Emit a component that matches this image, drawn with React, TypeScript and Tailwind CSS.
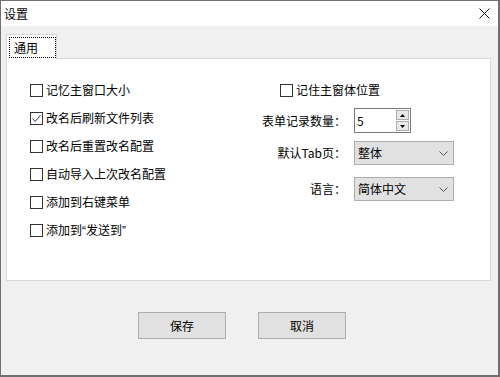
import React from "react";

function Box({ checked }: { checked?: boolean }) {
  return (
    <span className="w-[13px] h-[13px] border border-[#333333] bg-white flex items-center justify-center shrink-0">
      {checked && (
        <svg width="11" height="11" viewBox="0 0 11 11">
          <path d="M1.5 5.5 L4.2 8.4 L9.5 2.2" fill="none" stroke="#3a3a3a" strokeWidth="1" />
        </svg>
      )}
    </span>
  );
}

function CheckRow({ label, checked }: { label: React.ReactNode; checked?: boolean }) {
  return (
    <div className="h-[28px] flex items-center gap-[3px]">
      <Box checked={checked} />
      <span>{label}</span>
    </div>
  );
}

function Chevron() {
  return (
    <svg width="9" height="5" viewBox="0 0 9 5">
      <path d="M0.5 0.5 L4.5 4.5 L8.5 0.5" fill="none" stroke="#555555" strokeWidth="1" />
    </svg>
  );
}

function Combo({ value }: { value: string }) {
  return (
    <div className="w-[100px] h-[24px] border border-[#adadad] bg-[#e1e1e1] flex items-center justify-between pl-[3px] pr-[5px]">
      <span>{value}</span>
      <Chevron />
    </div>
  );
}

export default function App() {
  return (
    <div className="w-[500px] h-[377px] flex flex-col border-l border-t border-r-2 border-b-2 border-[#707070] text-[12px] text-black font-['Noto_Sans_CJK_SC','Microsoft_YaHei',sans-serif] leading-normal overflow-hidden">
      <div className="h-[25px] bg-white flex items-center justify-between pl-[3px] pr-[8px] shrink-0">
        <span className="text-[12px]">设置</span>
        <svg width="11" height="11" viewBox="0 0 11 11">
          <path d="M0.5 0.5 L10.5 10.5 M10.5 0.5 L0.5 10.5" stroke="#111111" strokeWidth="1" />
        </svg>
      </div>
      <div className="flex-1 bg-[#f0f0f0] pl-[5px] pt-[8px] flex flex-col">
        <div className="relative z-10 -mb-px w-[51px] h-[25px] bg-white border border-b-0 border-[#d9d9d9]">
          <div className="mt-[2px] ml-[2px] w-[47px] h-[21px] border border-dotted border-black flex items-center pl-[4px]">
            通用
          </div>
        </div>
        <div className="w-[485px] h-[223px] bg-white border border-[#d9d9d9] flex">
          <div className="w-[247px] pl-[23px] pt-[17px] flex flex-col">
            <CheckRow label="记忆主窗口大小" />
            <CheckRow label="改名后刷新文件列表" checked />
            <CheckRow label="改名后重置改名配置" />
            <CheckRow label="自动导入上次改名配置" />
            <CheckRow label="添加到右键菜单" />
            <CheckRow
              label={
                <>
                  添加到<span className="font-['Liberation_Sans',sans-serif]">“</span>发送到<span className="font-['Liberation_Sans',sans-serif]">”</span>
                </>
              }
            />
          </div>
          <div className="pt-[17px] flex flex-col">
            <div className="h-[28px] flex items-center gap-[3px] pl-[26px]">
              <Box />
              <span>记住主窗体位置</span>
            </div>
            <div className="mt-[4px] h-[25px] flex items-center gap-[8px]">
              <span className="w-[92px] text-right">表单记录数量：</span>
              <div className="w-[57px] h-[25px] border border-[#7a7a7a] bg-white flex">
                <span className="flex-1 flex items-center pl-[2px]">5</span>
                <div className="w-[15px] flex flex-col p-[1px] gap-[1px]">
                  <div className="flex-1 border border-[#adadad] bg-[#e8e8e8] flex items-center justify-center">
                    <svg width="5" height="3" viewBox="0 0 5 3"><path d="M2.5 0 L5 3 L0 3 Z" fill="#000" /></svg>
                  </div>
                  <div className="flex-1 border border-[#adadad] bg-[#e8e8e8] flex items-center justify-center">
                    <svg width="5" height="3" viewBox="0 0 5 3"><path d="M0 0 L5 0 L2.5 3 Z" fill="#000" /></svg>
                  </div>
                </div>
              </div>
            </div>
            <div className="mt-[8px] h-[24px] flex items-center gap-[8px]">
              <span className="w-[92px] text-right">默认Tab页：</span>
              <Combo value="整体" />
            </div>
            <div className="mt-[12px] h-[24px] flex items-center gap-[8px]">
              <span className="w-[92px] text-right">语言：</span>
              <Combo value="简体中文" />
            </div>
          </div>
        </div>
        <div className="mt-[31px] ml-[132px] flex gap-[32px]">
          <div className="w-[88px] h-[27px] border border-[#adadad] bg-[#e1e1e1] flex items-center justify-center">保存</div>
          <div className="w-[88px] h-[27px] border border-[#adadad] bg-[#e1e1e1] flex items-center justify-center">取消</div>
        </div>
      </div>
    </div>
  );
}
